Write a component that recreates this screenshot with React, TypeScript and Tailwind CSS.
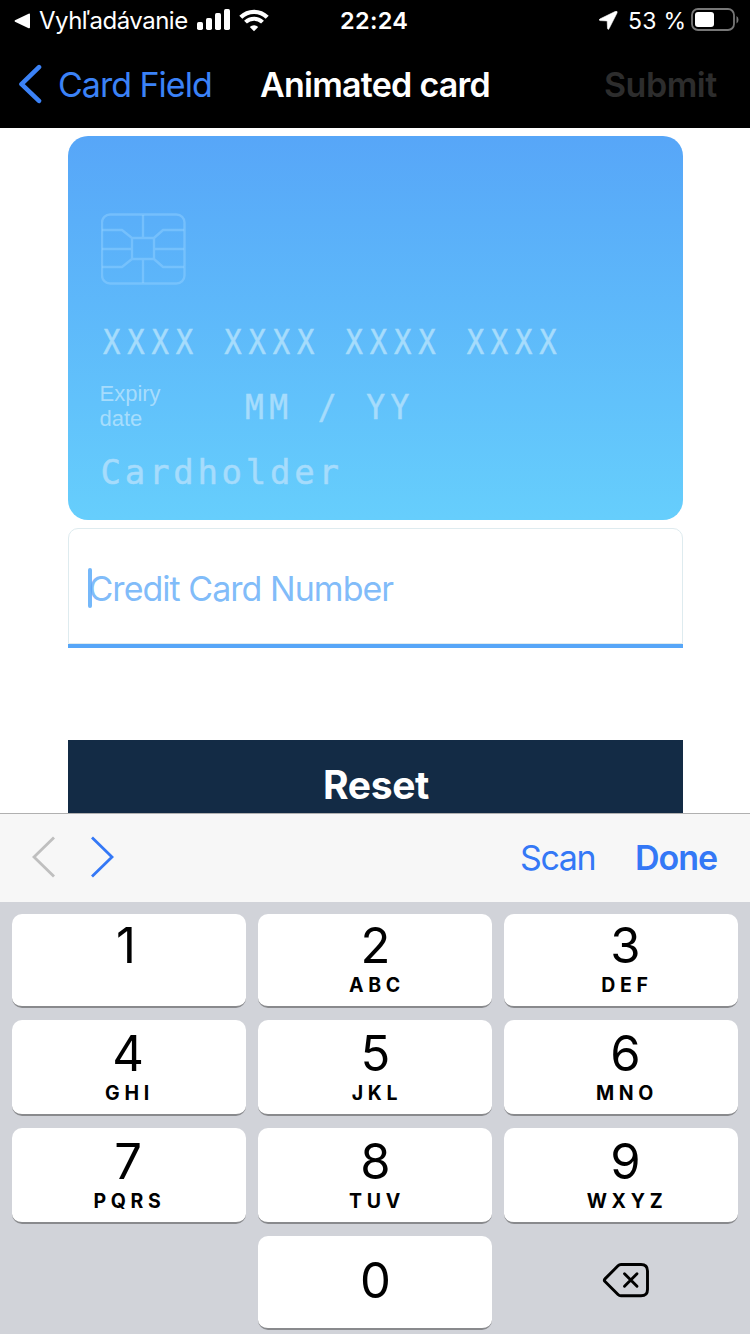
import React from 'react';

type KeyProps = { digit: string; letters?: string; place?: string };

function Key({ digit, letters, place = '' }: KeyProps) {
  return (
    <button
      className={'flex h-full flex-col items-center rounded-[10px] border-b-2 border-[#898a8d] bg-white text-black ' + place}
    >
      <span className="h-[59px] text-[49px] leading-[60px] tracking-[-1px]">{digit}</span>
      {letters && <span className="pl-1 text-[19.5px] font-bold leading-[20px] tracking-[4.7px]">{letters}</span>}
    </button>
  );
}

function StatusBar() {
  return (
    <div className="flex h-10 items-center pt-px text-[24px] leading-10">
      <svg className="ml-[14px] h-4 w-4" viewBox="0 0 16 16" fill="white">
        <path d="M1 7.2 14.6.7Q16 0 16 1.5v12.8q0 1.5-1.4.9L1 8.8Q0 8 1 7.2Z" />
      </svg>
      <span className="ml-[9px] w-[158px] whitespace-nowrap text-[24px] tracking-[-0.5px]">Vyhľadávanie</span>
      <svg className="h-[22px] w-[34px] -translate-y-[2px]" viewBox="0 0 34 22" fill="white">
        <rect x="0" y="14" width="6" height="8" rx="1.7" />
        <rect x="9" y="10" width="6" height="12" rx="1.7" />
        <rect x="18" y="5" width="6" height="17" rx="1.7" />
        <rect x="27" y="1" width="6" height="21" rx="1.7" />
      </svg>
      <svg className="ml-[8px] h-[23px] w-[30px]" viewBox="0 0 30 23" fill="none" stroke="white">
        <path d="M1.8 8.3a18.6 18.6 0 0 1 26.4 0" strokeWidth="4.2" />
        <path d="M6.5 13.2a12 12 0 0 1 17 0" strokeWidth="4" />
        <path d="M15 22.2 10.8 18a6 6 0 0 1 8.4 0Z" fill="white" stroke="none" />
      </svg>
      <span className="ml-[71px] w-[72px] whitespace-nowrap text-[23.5px] font-semibold tracking-[0.3px]">22:24</span>
      <svg className="ml-[187px] h-[19px] w-[19px]" viewBox="0 0 19 19" fill="white">
        <path d="M16.6.3.8 8Q-.4 9.4 1 9.6l7.2.3.3 7.7q.5 1.5 1.5.2L18 2Q18.7-.4 16.6.3Z" stroke="white" strokeWidth=".6" />
      </svg>
      <span className="ml-[10px] w-[63px] whitespace-nowrap text-[23px] tracking-[0.3px]">53 %</span>
      <svg className="h-6 w-12 -translate-y-[1px]" viewBox="0 0 48 24">
        <rect x="1" y="1" width="42" height="21" rx="6" fill="none" stroke="#777" strokeWidth="1.8" />
        <rect x="4" y="4" width="19" height="15" rx="3" fill="white" />
        <path d="M45.5 8v7.5q2-1 2-3.75T45.5 8Z" fill="#777" />
      </svg>
    </div>
  );
}

const embossed =
  "h-[46px] origin-left whitespace-pre font-['DejaVu_Sans_Mono',monospace] text-[34px] leading-[46px] text-[#a6dcfc] [-webkit-text-stroke:0.5px_#a6dcfc] ";

function CardPreview() {
  return (
    <div className="mx-auto flex h-[384px] w-[615px] shrink-0 flex-col rounded-[20px] bg-linear-to-b from-[#57a6f8] to-[#66cefc] pt-[77px] pl-8 text-white/45">
      <svg className="ml-px h-[72px] w-[85px] shrink-0" viewBox="0 0 85 72" fill="none" stroke="#8fd0ff" strokeOpacity=".5" strokeWidth="2.4">
        <rect x="1" y="1.5" width="82.5" height="69" rx="8" />
        <path d="M42 2v23M42 46v24M1 36h29M53 36h30M31 25h22v21H31ZM1 17h20l10 8M1 54h20l10-8M83 17H62l-9 8M83 54H62l-9-8" />
      </svg>
      <div className={embossed + 'mt-[34px] ml-[3px] scale-x-85 tracking-[8.05px]'}>XXXX XXXX XXXX XXXX</div>
      <div className="mt-[13px] flex h-[60px] items-start">
        <div className="mt-[3px] w-[145px] font-['Liberation_Sans',sans-serif] text-[22px] leading-[25px]">
          Expiry
          <br />
          date
        </div>
        <div className={embossed + 'mt-[6px] scale-x-92 tracking-[5.9px]'}>MM / YY</div>
      </div>
      <div className={embossed + 'mt-[11px] ml-px tracking-[3.75px]'}>Cardholder</div>
    </div>
  );
}

const keys: KeyProps[] = [
  { digit: '1', place: 'pt-[2px] pr-[7px]' },
  { digit: '2', letters: 'ABC', place: 'pt-[2px]' },
  { digit: '3', letters: 'DEF', place: 'pt-[2px] pl-[8px]' },
  { digit: '4', letters: 'GHI', place: 'pt-[4px] pr-[3px]' },
  { digit: '5', letters: 'JKL', place: 'pt-[4px]' },
  { digit: '6', letters: 'MNO', place: 'pt-[4px] pl-[8px]' },
  { digit: '7', letters: 'PQRS', place: 'pt-[4px] pr-[3px]' },
  { digit: '8', letters: 'TUV', place: 'pt-[4px]' },
  { digit: '9', letters: 'WXYZ', place: 'pt-[4px] pl-[8px]' },
];

export default function App() {
  return (
    <div className="flex h-[1334px] w-[750px] flex-col overflow-hidden bg-white font-['Inter',sans-serif]">
      <header className="h-32 shrink-0 bg-black text-white">
        <StatusBar />
        <nav className="flex h-[88px] items-center text-[34px] leading-[88px]">
          <svg className="ml-[18px] h-10 w-6" viewBox="0 0 24 40" fill="none" stroke="#3b82f7" strokeWidth="4.6" strokeLinecap="round" strokeLinejoin="round">
            <path d="M21 3.2 3.5 20.2 21 36.8" />
          </svg>
          <span className="mt-px ml-[16px] w-[202px] whitespace-nowrap tracking-[-1px] text-[#3b82f7]">Card Field</span>
          <span className="mt-px w-[344px] whitespace-nowrap font-semibold tracking-[-0.75px]">Animated card</span>
          <span className="mt-px whitespace-nowrap font-semibold tracking-[-0.5px] text-[#2d2d2d]">Submit</span>
        </nav>
      </header>

      <main className="flex h-[685px] shrink-0 flex-col overflow-hidden pt-2">
        <CardPreview />
        <div className="mx-auto mt-2 flex h-[120px] w-[615px] shrink-0 flex-col">
          <div className="flex h-[116px] items-center rounded-t-[10px] border border-[#deebef] pl-[19px]">
            <span className="mt-[3px] h-10 w-1 rounded-sm bg-[#75b8fa]" />
            <span className="-ml-[3px] mt-[5px] whitespace-nowrap text-[34px] leading-[44px] tracking-[-0.97px] text-[#57a6f8]/75">
              Credit Card Number
            </span>
          </div>
          <div className="h-1 bg-[#57a6f8]" />
        </div>
        <button className="mx-auto mt-[92px] h-[90px] w-[615px] shrink-0 bg-[#132b45] pl-[2px] text-center text-[39px] font-bold leading-[90px] tracking-[-0.3px] text-white">
          Reset
        </button>
      </main>

      <div className="flex h-[89px] shrink-0 items-center border-t border-[#b0b0b0] bg-[#f7f7f7] pb-[2px] text-[34px] text-[#3478f6]">
        <svg className="ml-8 h-[42px] w-6" viewBox="0 0 24 42" fill="none" stroke="#bfbfbf" strokeWidth="2.8">
          <path d="M22 1.5 2 21l20 19.5" />
        </svg>
        <svg className="ml-[34px] h-[42px] w-6" viewBox="0 0 24 42" fill="none" stroke="#3478f6" strokeWidth="2.8">
          <path d="M2 1.5 22 21 2 40.5" />
        </svg>
        <span className="ml-[406px] w-[115px] whitespace-nowrap tracking-[-1.4px]">Scan</span>
        <span className="whitespace-nowrap font-semibold tracking-[-1px]">Done</span>
      </div>

      <div className="grid h-[432px] shrink-0 grid-cols-3 grid-rows-[94px_96px_96px_94px] gap-3 bg-[#d1d3d9] px-3 pt-3">
        {keys.map((k) => (
          <Key key={k.digit} {...k} />
        ))}
        <div />
        <Key digit="0" place="pt-[15px]" />
        <button className="flex items-center justify-center pb-[6px]">
          <svg className="h-9 w-12 translate-x-[5px]" viewBox="0 0 48 36" fill="none" stroke="black" strokeWidth="2.9" strokeLinecap="round" strokeLinejoin="round">
            <path d="M19 2.5H39Q45.5 2.5 45.5 9V27.5Q45.5 33.8 39 33.8H19Q17.3 33.8 16 32.5L3 19.5Q1.7 18.2 3 16.9L16 3.8Q17.3 2.5 19 2.5Z" />
            <path d="m22.5 11.8 12.5 12.5M35 11.8 22.5 24.3" />
          </svg>
        </button>
      </div>
    </div>
  );
}
